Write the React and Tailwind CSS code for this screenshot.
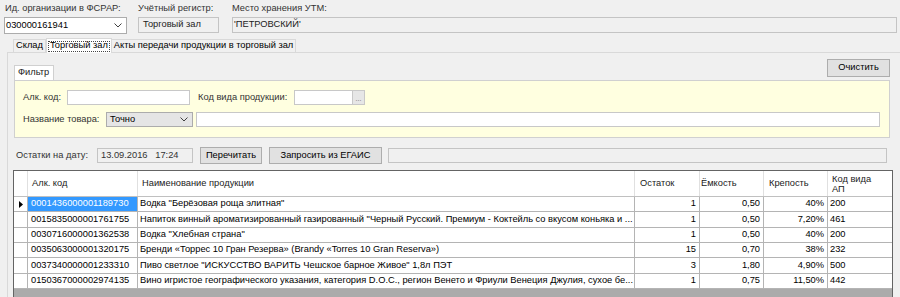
import React from "react";

const rows = [
  ["0001436000001189730", 'Водка "Берёзовая роща элитная"', "1", "0,50", "40%", "200"],
  ["0015835000001761755", 'Напиток винный ароматизированный газированный "Черный Русский. Премиум - Коктейль со вкусом коньяка и ...', "1", "0,50", "7,20%", "461"],
  ["0030716000001362538", 'Водка "Хлебная страна"', "1", "0,50", "40%", "200"],
  ["0035063000001320175", "Бренди «Торрес 10 Гран Резерва» (Brandy «Torres 10 Gran Reserva»)", "15", "0,70", "38%", "232"],
  ["0037340000001233310", 'Пиво светлое "ИСКУССТВО ВАРИТЬ Чешское барное Живое" 1,8л ПЭТ', "3", "1,80", "4,90%", "500"],
  ["0150367000002974135", "Вино игристое географического указания, категория D.O.C., регион Венето и Фриули Венеция Джулия, сухое бе...", "1", "0,75", "11,50%", "442"],
];

const rowHeights = ["h-[15px]", "h-[16px]", "h-[15px]", "h-[15px]", "h-[16px]", "h-[15px]"];

function Chevron() {
  return (
    <svg width="8" height="5" viewBox="0 0 8 5" className="shrink-0">
      <path d="M0.5 0.5 L4 4 L7.5 0.5" fill="none" stroke="#404040" strokeWidth="1" />
    </svg>
  );
}

function WinButton({ children, className }) {
  return (
    <div className={`flex items-center justify-center border border-[#adadad] bg-[#e1e1e1] text-black ${className}`}>
      {children}
    </div>
  );
}

export default function App() {
  return (
    <div className="w-[900px] h-[297px] overflow-hidden bg-[#f0f0f0] font-['Liberation_Sans',Arial,sans-serif] text-[9.3px] text-black leading-none">
      {/* header fields */}
      <div className="flex pt-[4px] pl-[4px] pr-[3px]">
        <div className="w-[123px] flex flex-col">
          <div className="h-[11px] pl-[1px] text-[#333]">Ид. организации в ФСРАР:</div>
          <div className="mt-[2px] h-[17px] bg-white border border-[#acacac] flex items-center justify-between pl-[1px] pr-[4px]">
            <span>030000161941</span>
            <Chevron />
          </div>
        </div>
        <div className="ml-[11px] w-[81px] flex flex-col">
          <div className="h-[11px] text-[#333]">Учётный регистр:</div>
          <div className="mt-[2px] h-[16px] border border-[#c4c4c4] flex items-center pl-[4px] text-[#222]">Торговый зал</div>
        </div>
        <div className="ml-[13px] flex-1 flex flex-col">
          <div className="h-[11px] text-[#333]">Место хранения УТМ:</div>
          <div className="mt-[2px] h-[16px] border border-[#c4c4c4] flex items-center pl-[1px] text-[#222]">'ПЕТРОВСКИЙ'</div>
        </div>
      </div>

      {/* tabs */}
      <div className="mt-[3px] ml-[7px]">
        <div className="flex items-end pl-[6px] h-[15px]">
          <div className="h-[13px] px-[2px] border border-b-0 border-[#d9d9d9] flex items-center">Склад</div>
          <div className="h-[15px] mb-[-1px] bg-white border border-b-0 border-[#d9d9d9] px-[1px] flex items-center relative z-10">
            <span className="border border-dotted border-[#444] px-[1px] h-[11px] flex items-center">Торговый зал</span>
          </div>
          <div className="h-[13px] px-[2px] border border-b-0 border-l-0 border-[#d9d9d9] flex items-center">Акты передачи продукции в торговый зал</div>
        </div>

        <div className="border-l border-t border-[#d9d9d9] h-[260px]">
          {/* filter */}
          <div className="flex items-end justify-between pt-[6px] pl-[6px] pr-[10px]">
            <div className="h-[15px] w-[40px] bg-white border border-b-0 border-[#d0d0d0] flex items-center pl-[3px] text-[#222]">Фильтр</div>
            <WinButton className="w-[63px] h-[18px] mb-[3px] text-[#222]">Очистить</WinButton>
          </div>
          <div className="ml-[6px] mr-[10px] h-[58px] bg-[#ffffe0] border border-[#d0d0d0] pt-[9px] pl-[8px] pr-[9px]">
            <div className="flex items-center h-[15px]">
              <div className="w-[44px] text-[#333]">Алк. код:</div>
              <div className="w-[123px] h-[15px] bg-white border border-[#c8c8c8]" />
              <div className="ml-[8px] w-[96px] text-[#333]">Код вида продукции:</div>
              <div className="w-[71px] h-[15px] bg-white border border-[#c8c8c8] flex justify-end">
                <div className="w-[12px] h-full bg-[#e6e6e6] border-l border-[#c8c8c8] flex items-end justify-center pb-[2px] text-[7px] text-[#666]">...</div>
              </div>
            </div>
            <div className="flex items-center h-[15px] mt-[7px]">
              <div className="w-[83px] text-[#333]">Название товара:</div>
              <div className="w-[87px] h-[15px] bg-[#e5e5e5] border border-[#acacac] flex items-center justify-between pl-[3px] pr-[4px]">
                <span>Точно</span>
                <Chevron />
              </div>
              <div className="ml-[3px] flex-1 h-[15px] bg-white border border-[#c8c8c8]" />
            </div>
          </div>

          {/* date row */}
          <div className="flex items-center mt-[9px] pl-[8px] pr-[13px] h-[17px]">
            <div className="w-[81px] text-[#333]">Остатки на дату:</div>
            <div className="w-[96px] h-[15px] border border-[#c4c4c4] flex items-center pl-[3px] text-[#333] whitespace-pre">13.09.2016   17:24</div>
            <WinButton className="ml-[7px] w-[62px] h-[17px]">Перечитать</WinButton>
            <WinButton className="ml-[7px] w-[113px] h-[17px]">Запросить из ЕГАИС</WinButton>
            <div className="ml-[6px] flex-1 h-[15px] border border-[#c4c4c4]" />
          </div>

          {/* grid */}
          <div className="mt-[6px] ml-[5px] w-[880px] h-[128px] border-l border-t border-r border-[#646464] bg-[#ababab] overflow-hidden">
            <div className="flex h-[26px] bg-white border-b border-[#c0c0c0] text-[#222]">
              <div className="w-[14px] border-r border-[#e0e0e0]" />
              <div className="w-[110px] border-r border-[#e0e0e0] flex items-center pl-[4px]">Алк. код</div>
              <div className="w-[497px] border-r border-[#e0e0e0] flex items-center pl-[4px]">Наименование продукции</div>
              <div className="w-[65px] border-r border-[#e0e0e0] flex items-center pl-[5px]">Остаток</div>
              <div className="w-[64px] border-r border-[#e0e0e0] flex items-center pl-[1px]">Ёмкость</div>
              <div className="w-[64px] border-r border-[#e0e0e0] flex items-center pl-[5px]">Крепость</div>
              <div className="w-[64px] flex flex-col justify-center pl-[4px] leading-[10px]">
                <span>Код вида</span>
                <span>АП</span>
              </div>
            </div>
            {rows.map((r, i) => (
              <div key={r[0]} className={`flex bg-white ${rowHeights[i]}`}>
                <div className="w-[14px] border-r border-b border-[#b4b4b4] flex items-center justify-center">
                  {i === 0 && (
                    <svg width="4" height="7" viewBox="0 0 4 7">
                      <path d="M0 0 L4 3.5 L0 7 Z" fill="#000" />
                    </svg>
                  )}
                </div>
                <div className={`w-[110px] border-r border-b border-[#b4b4b4] flex items-center pl-[3px] ${i === 0 ? "bg-[#3399ff] text-white" : ""}`}>{r[0]}</div>
                <div className="w-[497px] border-r border-b border-[#b4b4b4] flex items-center pl-[2px] whitespace-nowrap overflow-hidden">{r[1]}</div>
                <div className="w-[65px] border-r border-b border-[#b4b4b4] flex items-center justify-end pr-[3px]">{r[2]}</div>
                <div className="w-[64px] border-r border-b border-[#b4b4b4] flex items-center justify-end pr-[3px]">{r[3]}</div>
                <div className="w-[64px] border-r border-b border-[#b4b4b4] flex items-center justify-end pr-[3px]">{r[4]}</div>
                <div className="w-[64px] border-b border-[#b4b4b4] flex items-center pl-[2px]">{r[5]}</div>
              </div>
            ))}
          </div>
        </div>
      </div>
    </div>
  );
}
